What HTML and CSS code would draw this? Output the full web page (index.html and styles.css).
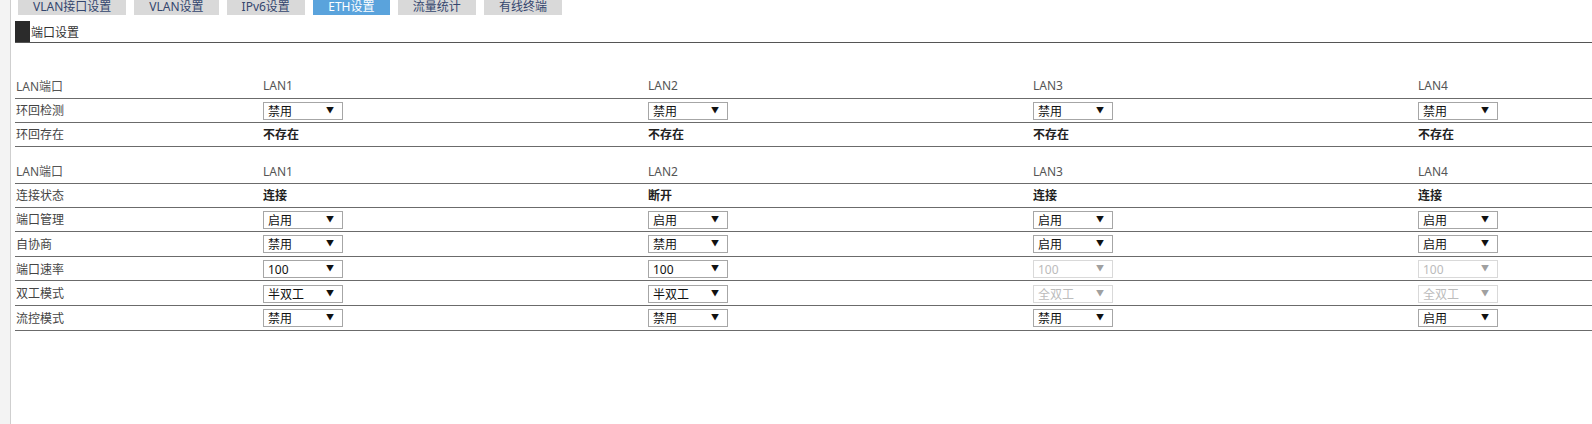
FILE: index.html
```html
<!DOCTYPE html>
<html lang="zh-CN">
<head>
  <meta charset="UTF-8">
  <title>ETH设置</title>
  <link rel="stylesheet" href="styles.css">
</head>
<body>
  <div class="sidebar"></div>
  <div class="main">
    <div class="tabs">
      <a class="tab">VLAN接口设置</a>
      <a class="tab">VLAN设置</a>
      <a class="tab">IPv6设置</a>
      <a class="tab active">ETH设置</a>
      <a class="tab">流量统计</a>
      <a class="tab">有线终端</a>
    </div>

    <div class="section-title"><span class="mark"></span>端口设置</div>

    <table class="grid first">
      <tr class="head">
        <td>LAN端口</td><td>LAN1</td><td>LAN2</td><td>LAN3</td><td>LAN4</td>
      </tr>
      <tr class="opt">
        <td>环回检测</td>
        <td><label class="sel"><select><option>禁用</option><option>启用</option></select></label></td>
        <td><label class="sel"><select><option>禁用</option><option>启用</option></select></label></td>
        <td><label class="sel"><select><option>禁用</option><option>启用</option></select></label></td>
        <td><label class="sel"><select><option>禁用</option><option>启用</option></select></label></td>
      </tr>
      <tr class="txt">
        <td>环回存在</td>
        <td class="val">不存在</td><td class="val">不存在</td><td class="val">不存在</td><td class="val">不存在</td>
      </tr>
    </table>

    <table class="grid">
      <tr class="head">
        <td>LAN端口</td><td>LAN1</td><td>LAN2</td><td>LAN3</td><td>LAN4</td>
      </tr>
      <tr class="txt">
        <td>连接状态</td>
        <td class="val">连接</td><td class="val">断开</td><td class="val">连接</td><td class="val">连接</td>
      </tr>
      <tr class="opt">
        <td>端口管理</td>
        <td><label class="sel"><select><option>启用</option><option>禁用</option></select></label></td>
        <td><label class="sel"><select><option>启用</option><option>禁用</option></select></label></td>
        <td><label class="sel"><select><option>启用</option><option>禁用</option></select></label></td>
        <td><label class="sel"><select><option>启用</option><option>禁用</option></select></label></td>
      </tr>
      <tr class="opt">
        <td>自协商</td>
        <td><label class="sel"><select><option>禁用</option><option>启用</option></select></label></td>
        <td><label class="sel"><select><option>禁用</option><option>启用</option></select></label></td>
        <td><label class="sel"><select><option>启用</option><option>禁用</option></select></label></td>
        <td><label class="sel"><select><option>启用</option><option>禁用</option></select></label></td>
      </tr>
      <tr class="opt">
        <td>端口速率</td>
        <td><label class="sel"><select><option>100</option><option>10</option></select></label></td>
        <td><label class="sel"><select><option>100</option><option>10</option></select></label></td>
        <td><label class="sel off"><select disabled><option>100</option></select></label></td>
        <td><label class="sel off"><select disabled><option>100</option></select></label></td>
      </tr>
      <tr class="opt">
        <td>双工模式</td>
        <td><label class="sel"><select><option>半双工</option><option>全双工</option></select></label></td>
        <td><label class="sel"><select><option>半双工</option><option>全双工</option></select></label></td>
        <td><label class="sel off"><select disabled><option>全双工</option></select></label></td>
        <td><label class="sel off"><select disabled><option>全双工</option></select></label></td>
      </tr>
      <tr class="opt">
        <td>流控模式</td>
        <td><label class="sel"><select><option>禁用</option><option>启用</option></select></label></td>
        <td><label class="sel"><select><option>禁用</option><option>启用</option></select></label></td>
        <td><label class="sel"><select><option>禁用</option><option>启用</option></select></label></td>
        <td><label class="sel"><select><option>启用</option><option>禁用</option></select></label></td>
      </tr>
    </table>
  </div>
</body>
</html>
```

FILE: styles.css
```css
* {
  box-sizing: border-box;
}
html, body {
  height: 100%;
}
body {
  margin: 0;
  display: flex;
  overflow: hidden;
  background: #fff;
  font-family: "Noto Sans", "Noto Sans CJK SC", sans-serif;
  font-size: 12px;
  color: #444;
}
.sidebar {
  flex: 0 0 11px;
  background: #f3f3f3;
  border-right: 1px solid #cfcfcf;
}
.main {
  flex: 1;
  padding-left: 4px;
  min-width: 0;
}
.tabs {
  display: flex;
  gap: 8px;
  margin-left: 3px;
  height: 15px;
}
.tab {
  min-width: 77px;
  padding: 0 15px;
  height: 15px;
  line-height: 14px;
  text-align: center;
  background: #d9d9d9;
  color: #34466e;
  font-size: 12px;
  cursor: pointer;
}
.tab.active {
  background: #5aa3dc;
  color: #fff;
}
.section-title {
  display: flex;
  align-items: center;
  margin-top: 6px;
  height: 22px;
  border-bottom: 1px solid #555;
  color: #333;
}
.section-title .mark {
  width: 15px;
  height: 21px;
  background: #2b2b2b;
  margin-right: 1px;
  align-self: flex-start;
}
.grid {
  border-collapse: collapse;
  width: 1788px;
  table-layout: fixed;
  margin-top: 13px;
}
.grid.first {
  margin-top: 31px;
}
.grid td {
  width: 385px;
  height: 24px;
  padding: 0;
  border-bottom: 1px solid #6b6b6b;
  vertical-align: middle;
  white-space: nowrap;
}
.grid .txt td {
  height: 23.5px;
}
.grid .opt td {
  height: 24.6px;
}
.grid td:first-child {
  width: 248px;
  padding-left: 1px;
}
.grid .head td {
  color: #555;
}
.grid td.val {
  font-weight: bold;
  color: #222;
}
.sel {
  position: relative;
  display: inline-block;
  vertical-align: middle;
}
.sel select {
  appearance: none;
  -webkit-appearance: none;
  display: block;
  width: 80px;
  height: 18px;
  padding: 0 0 0 4px;
  border: 1px solid #a6a6a6;
  border-radius: 0;
  background: #fff;
  font-family: inherit;
  font-size: 12px;
  color: #111;
  outline: none;
}
.sel::after {
  content: "▼";
  position: absolute;
  right: 9px;
  top: 3px;
  font-size: 8px;
  line-height: 10px;
  color: #111;
  pointer-events: none;
}
.sel.off select {
  border-color: #c9c9c9;
  color: #a0a0a0;
}
.sel.off::after {
  color: #a0a0a0;
}
```
